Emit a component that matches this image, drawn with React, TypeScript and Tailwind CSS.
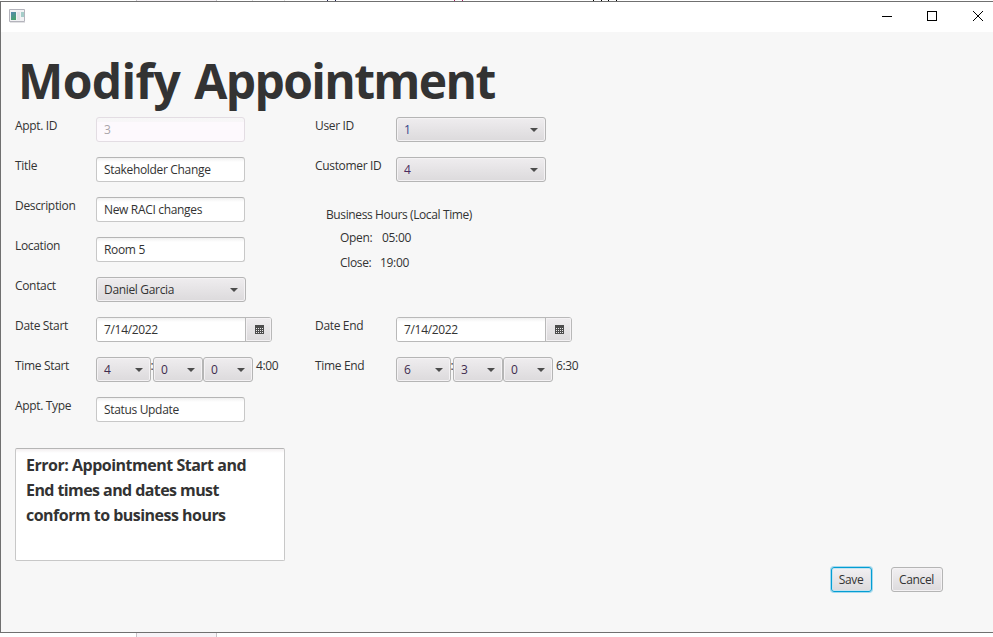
import type { ReactNode } from "react";

function Label({ children }: { children: ReactNode }) {
  return <span className="h-[18px] w-[81px] shrink-0 whitespace-nowrap leading-[18px]">{children}</span>;
}

function Row({ label, children }: { label: string; children: ReactNode }) {
  return (
    <div className="flex h-10 items-start">
      <Label>{label}</Label>
      {children}
    </div>
  );
}

function Field({ value, disabled = false }: { value: string; disabled?: boolean }) {
  return (
    <div
      className={
        "h-[25px] w-[149px] whitespace-nowrap rounded-[3px] border px-[7px] leading-[24px] " +
        (disabled
          ? "border-[#e3dde3] bg-[linear-gradient(#f7f7f7_0px,#f8f6f8_4px,#fdf9fd_4px)] text-[#aaa5aa]"
          : "border-[#c8c8c8] border-t-[#b5b5b5] bg-[linear-gradient(#f0f0f0_0px,#fff_4px)]")
      }
    >
      {value}
    </div>
  );
}

function Combo({ value, width, tone = "" }: { value: string; width: string; tone?: string }) {
  return (
    <div
      className={
        "flex h-[25px] shrink-0 items-center justify-between rounded-[3px] border border-[#b5b5b5] bg-linear-to-b from-[#efedef] to-[#dcdadc] pl-[7px] pr-[7px] shadow-[inset_0_0_0_1px_#f4f2f4] " +
        width
      }
    >
      <span className={"whitespace-nowrap leading-[23px] " + tone}>{value}</span>
      <svg width="8" height="4" viewBox="0 0 8 4" className="mt-px">
        <path d="M0 0h8L4 4z" fill="#4c4c4c" />
      </svg>
    </div>
  );
}

function DateField({ value }: { value: string }) {
  return (
    <div className="flex h-[25px] w-[176px] overflow-hidden rounded-[3px] border border-[#b9b9b9]">
      <div className="w-[149px] border-r border-[#b9b9b9] bg-[linear-gradient(#f0f0f0_0px,#fff_4px)] pl-[7px] leading-[23px]">
        {value}
      </div>
      <div className="flex flex-1 items-center justify-center bg-linear-to-b from-[#efedef] to-[#dcdadc] pl-px shadow-[inset_0_0_0_1px_#f4f2f4]">
        <svg width="9" height="9" viewBox="0 0 9 9" shapeRendering="crispEdges">
          <path d="M0 0h9v9H0z" fill="#4c4c4c" />
          <path d="M1 3h1v1H1zM3 3h1v1H3zM5 3h1v1H5zM7 3h1v1H7zM1 5h1v1H1zM3 5h1v1H3zM5 5h1v1H5zM7 5h1v1H7zM1 7h1v1H1zM3 7h1v1H3zM5 7h1v1H5zM7 7h1v1H7z" fill="#e9e7e9" />
        </svg>
      </div>
    </div>
  );
}

function TimeField({ parts, text }: { parts: [string, string, string]; text: string }) {
  return (
    <div className="flex items-start">
      <Combo value={parts[0]} width="w-[55px]" tone="text-[#3e2c4e]" />
      <span className="flex w-[2px] justify-center leading-[18px] text-[#333] tracking-normal">:</span>
      <Combo value={parts[1]} width="w-[50px]" tone="text-[#3e2c4e]" />
      <Combo value={parts[2]} width="w-[50px]" tone="text-[#3e2c4e]" />
      <span className="ml-[3px] leading-[18px] tracking-[-0.4px]">{text}</span>
    </div>
  );
}

export default function App() {
  return (
    <div className="flex h-[637px] w-[993px] flex-col overflow-hidden bg-white font-['Open_Sans','Noto_Sans',sans-serif] text-[12px] tracking-[-0.33px] text-[#333]">
      <div className="flex h-px pl-[136px]">
        <div className="h-px w-[81px] border-x border-[#c8c4c8] bg-[#f7f3f7]" />
        <div className="ml-[35px] h-px w-[33px] border-x border-[#ddd]" />
        <div className="ml-[42px] h-px w-[9px] border-x border-[#225]" />
        <div className="ml-[118px] h-px w-[9px] border-x border-[#a26]" />
        <div className="ml-[130px] h-px w-[9px] border-x border-black" />
        <div className="ml-[6px] h-px w-[9px] border-x border-black" />
      </div>
      <div className="flex h-[632px] flex-col border-y border-l border-[#707070] bg-[#f7f7f7]">
        <header className="flex h-[30px] shrink-0 items-center justify-between bg-white pl-2 pr-[9px]">
          <svg width="16" height="14" viewBox="0 0 16 14" className="mb-[2px]">
            <defs>
              <linearGradient id="pane" x1="0" y1="0" x2="0.4" y2="1">
                <stop offset="0" stopColor="#5588b0" />
                <stop offset="1" stopColor="#48a070" />
              </linearGradient>
            </defs>
            <path d="M.5.5h15v12H.5z" fill="#f2f2f4" stroke="#b4b4bc" />
            <path d="M1 13.5h15" stroke="#e2e2e4" />
            <path d="M2 3h5v8H2z" fill="url(#pane)" />
            <path d="M8 3h3v8H8z" fill="#e4e4e8" />
            <path d="M12 3h3v5h-3z" fill="#a5cdc9" />
          </svg>
          <svg width="102" height="12" viewBox="0 0 102 12" shapeRendering="crispEdges" className="mb-[2px]">
            <path d="M0 6.5h10" stroke="#000" />
            <path d="M45.5 1.5h9v9h-9z" fill="none" stroke="#000" />
            <path d="M91 1l10 10M101 1l-10 10" stroke="#000" shapeRendering="auto" />
          </svg>
        </header>

        <main className="flex flex-1 flex-col pl-[14px]">
          <h1 className="mt-[16px] flex h-[69px] gap-[14px] whitespace-nowrap pl-[3px] text-[48px] font-bold leading-[66px]">
            <span className="tracking-[-0.6px]">Modify</span>
            <span className="tracking-[-1.65px]">Appointment</span>
          </h1>

          <div className="flex">
            <section className="w-[300px]">
              <Row label="Appt. ID"><Field value="3" disabled /></Row>
              <Row label="Title"><Field value="Stakeholder Change" /></Row>
              <Row label="Description"><Field value="New RACI changes" /></Row>
              <Row label="Location"><Field value="Room 5" /></Row>
              <Row label="Contact"><Combo value="Daniel Garcia" width="w-[150px]" /></Row>
              <Row label="Date Start"><DateField value="7/14/2022" /></Row>
              <Row label="Time Start"><TimeField parts={["4", "0", "0"]} text="4:00" /></Row>
              <Row label="Appt. Type"><Field value="Status Update" /></Row>
            </section>

            <section className="w-[300px]">
              <Row label="User ID"><Combo value="1" width="w-[150px]" tone="text-[#35458a]" /></Row>
              <Row label="Customer ID"><Combo value="4" width="w-[150px]" tone="text-[#4a2c5e]" /></Row>
              <div className="h-[120px] pl-[11px] pt-[9px] leading-[18px]">
                <p className="tracking-[-0.38px]">Business Hours (Local Time)</p>
                <p className="mt-[5px] flex pl-[14px]"><span className="w-[42px]">Open:</span><span>05:00</span></p>
                <p className="mt-[7px] flex pl-[14px]"><span className="w-[40px]">Close:</span><span>19:00</span></p>
              </div>
              <Row label="Date End"><DateField value="7/14/2022" /></Row>
              <Row label="Time End"><TimeField parts={["6", "3", "0"]} text="6:30" /></Row>
            </section>
          </div>

          <div className="mt-[11px] h-[113px] w-[270px] rounded-[2px] border border-[#c8c8c8] border-t-[#b5b5b5] bg-[linear-gradient(#f3eff0_0px,#fff_4px)] px-[10px] pt-[4px] text-[16px] font-bold leading-[25px]">
            <p className="whitespace-nowrap tracking-[-0.49px]">Error: Appointment Start and</p>
            <p className="whitespace-nowrap tracking-[-0.58px]">End times and dates must</p>
            <p className="whitespace-nowrap tracking-[-0.52px]">conform to business hours</p>
          </div>

          <div className="mt-[6px] flex justify-end gap-[19px] pr-[50px]">
            <button className="h-[25px] w-[41px] rounded-[3px] border border-[#039ed3] bg-linear-to-b from-[#f2f0f2] to-[#dcdadc] pr-px leading-[23px] shadow-[0_0_0_1px_#a5d9ee,inset_0_0_0_1px_#c5e3f0]">
              Save
            </button>
            <button className="h-[25px] w-[52px] rounded-[3px] border border-[#b5b5b5] bg-linear-to-b from-[#f2f0f2] to-[#dcdadc] pr-px leading-[23px] shadow-[inset_0_0_0_1px_#f4f2f4]">
              Cancel
            </button>
          </div>
        </main>
      </div>
      <div className="ml-[136px] h-[4px] w-[81px] border-x border-[#c8c4c8] bg-[#f7f3f7]" />
    </div>
  );
}
